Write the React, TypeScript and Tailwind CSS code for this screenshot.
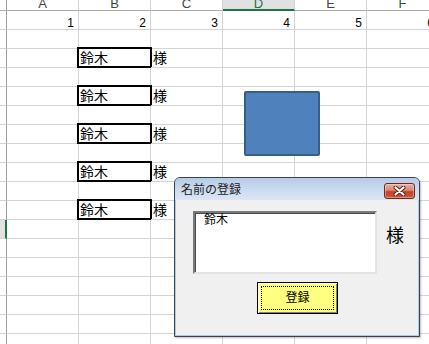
import React from "react";

const COLS = ["A", "B", "C", "D", "E", "F"];
const ROWS = Array.from({ length: 18 }, (_, i) => i + 1);
const NAME_ROWS = [3, 5, 7, 9, 11];

function HeaderRow() {
  return (
    <div className="flex h-[11px]">
      <div className="w-[7px] h-[11px] shrink-0 border-r border-b border-r-[#9e9e9e] border-b-[#ababab] bg-white" />
      {COLS.map((c) => {
        const sel = c === "D";
        return (
          <div
            key={c}
            className={
              "w-[72px] h-[11px] shrink-0 overflow-hidden flex justify-center items-start border-r border-r-[#d4d4d4] " +
              (sel
                ? "bg-[#e1e1e1] border-b-2 border-b-[#217346] text-[#217346]"
                : "bg-white border-b border-b-[#ababab] text-[#444]")
            }
          >
            <span className="text-[13px] leading-[13px] -mt-[3px]">{c}</span>
          </div>
        );
      })}
    </div>
  );
}

function DataRow({ r }: { r: number }) {
  const isName = NAME_ROWS.includes(r);
  const sel = r === 12;
  return (
    <div className="flex h-[19px]">
      <div
        className={
          "w-[7px] h-[19px] shrink-0 border-b border-b-[#d4d4d4] " +
          (sel ? "bg-[#e1e1e1] border-r-2 border-r-[#217346]" : "bg-white border-r border-r-[#9e9e9e]")
        }
      />
      {COLS.map((c, ci) => {
        let content: React.ReactNode = null;
        let cls = "";
        if (r === 1) {
          content = <span className="text-[12px] leading-[12px] text-black">{ci + 1}</span>;
          cls = "flex items-end justify-end pr-[4px]";
        } else if (isName && c === "B") {
          content = (
            <>
              <div className="absolute -left-[2px] -right-[2px] -top-[2px] -bottom-[1px] border-2 border-black" />
              <span className="relative text-[14px] leading-[18px] text-black">鈴木</span>
            </>
          );
          cls = "flex items-center pl-[1px]";
        } else if (isName && c === "C") {
          content = <span className="text-[14px] leading-[18px] text-black">様</span>;
          cls = "flex items-center pl-[2px]";
        }
        return (
          <div
            key={c}
            className={
              "relative w-[72px] h-[19px] shrink-0 border-r border-b border-[#d4d4d4] " + cls
            }
          >
            {content}
          </div>
        );
      })}
    </div>
  );
}

function CloseX() {
  return (
    <svg width="13" height="10" viewBox="0 0 13 10">
      <path d="M2.5 1.5 L10.5 8.5 M10.5 1.5 L2.5 8.5" stroke="#5a1a10" strokeWidth="4" strokeLinecap="round" />
      <path d="M2.5 1.5 L10.5 8.5 M10.5 1.5 L2.5 8.5" stroke="#ffffff" strokeWidth="2.2" strokeLinecap="round" />
    </svg>
  );
}

function Dialog() {
  return (
    <div className="absolute left-[174px] top-[177px] w-[246px] h-[160px] border border-[#3a4150] rounded-t-[6px] bg-[#aecbe8] flex flex-col overflow-hidden shadow-[1px_1px_2px_rgba(0,0,0,0.25)]">
      <div className="h-[22px] shrink-0 flex items-start justify-between pl-[6px] pr-[4px] pt-[5px] bg-[linear-gradient(180deg,#b6cbe6_0%,#c9d9ee_45%,#dbe6f4_100%)]">
        <span className="text-[12px] leading-[14px] text-[#1b1b1b]">名前の登録</span>
        <div className="w-[31px] h-[16px] rounded-[3px] border border-[#6a2a20] flex items-center justify-center bg-[linear-gradient(180deg,#eab0a2_0%,#d98571_45%,#c1412a_55%,#cc5a40_100%)] shadow-[inset_0_0_0_1px_rgba(255,255,255,0.35)]">
          <CloseX />
        </div>
      </div>
      <div className="flex-1 mx-[1px] mb-[1px] bg-[#f0f0f0] pt-[11px] pl-[17px]">
        <div className="flex items-start">
          <div className="w-[184px] h-[63px] bg-white border-2 border-t-[#7a7a7a] border-l-[#7a7a7a] border-b-[#e3e3e3] border-r-[#e3e3e3] shadow-[inset_1px_1px_0_#4a4a4a] pl-[9px] pt-[1px]">
            <span className="block text-[12px] leading-[13px] text-black">鈴木</span>
          </div>
          <span className="ml-[9px] mt-[15px] text-[18px] leading-[20px] text-black">様</span>
        </div>
        <div className="ml-[64px] mt-[8px] w-[81px] h-[32px] border border-black bg-[#ffff80] shadow-[inset_1px_1px_0_#ffffff,inset_-1px_-1px_0_#808080] p-[3px]">
          <div className="w-full h-full border border-dotted border-black flex items-center justify-center">
            <span className="text-[12px] leading-[14px] text-black">登録</span>
          </div>
        </div>
      </div>
    </div>
  );
}

export default function App() {
  return (
    <div
      className="relative w-[429px] h-[344px] overflow-hidden bg-white"
      style={{ fontFamily: '"Liberation Sans", "Noto Sans CJK JP", sans-serif' }}
    >
      <div className="flex flex-col">
        <HeaderRow />
        {ROWS.map((r) => (
          <DataRow key={r} r={r} />
        ))}
      </div>
      <div className="absolute left-[244px] top-[91px] w-[76px] h-[65px] bg-[#4f81bd] border-2 border-[#385d8a] rounded-[2px]" />
      <Dialog />
    </div>
  );
}
